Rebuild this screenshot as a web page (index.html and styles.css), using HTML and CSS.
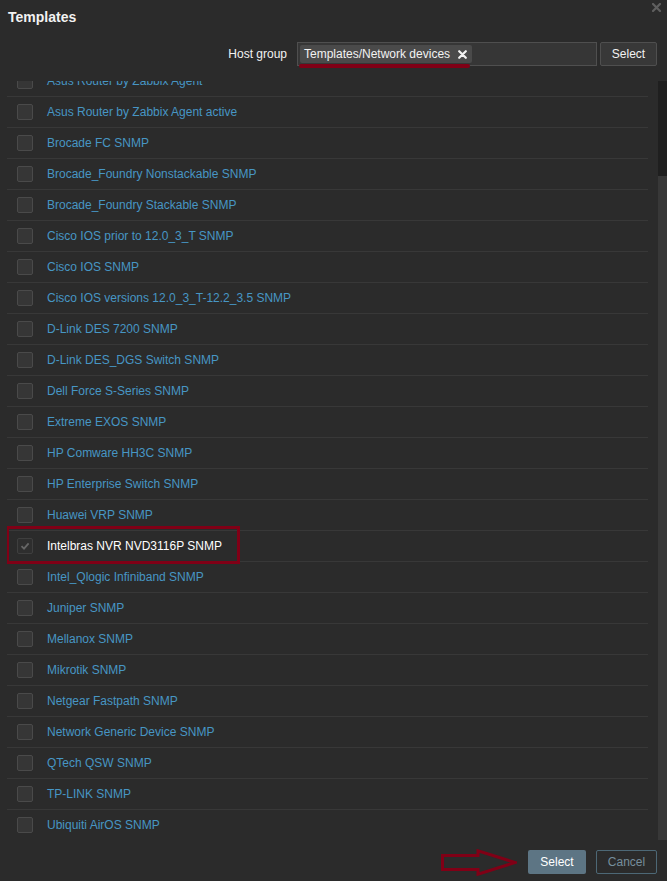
FILE: index.html
```html
<!DOCTYPE html>
<html>
<head>
<meta charset="utf-8">
<link rel="stylesheet" href="styles.css">
</head>
<body>
<div class="dialog">
  <header class="dlg-head">
    <h1 class="title">Templates</h1>
    <button class="close" aria-label="Close">
      <svg width="9" height="9" viewBox="0 0 9 9"><path d="M1 1 L8 8 M8 1 L1 8" stroke="#5f5f5f" stroke-width="2.2" stroke-linecap="square"/></svg>
    </button>
  </header>

  <div class="filter">
    <span class="filter-label">Host group</span>
    <div class="ms">
      <span class="chip">Templates/Network devices
        <svg class="chip-x" width="9" height="9" viewBox="0 0 9 9"><path d="M1.2 1.2 L7.8 7.8 M7.8 1.2 L1.2 7.8" stroke="#f2f2f2" stroke-width="2.2" stroke-linecap="round"/></svg>
      </span>
      <span class="mark-underline"></span>
    </div>
    <button class="btn-alt">Select</button>
  </div>

  <div class="body">
    <div class="viewport">
      <ul class="list">
        <li class="row"><span class="cb"></span><a class="lnk">Asus Router by Zabbix Agent</a></li>
        <li class="row"><span class="cb"></span><a class="lnk">Asus Router by Zabbix Agent active</a></li>
        <li class="row"><span class="cb"></span><a class="lnk">Brocade FC SNMP</a></li>
        <li class="row"><span class="cb"></span><a class="lnk">Brocade_Foundry Nonstackable SNMP</a></li>
        <li class="row"><span class="cb"></span><a class="lnk">Brocade_Foundry Stackable SNMP</a></li>
        <li class="row"><span class="cb"></span><a class="lnk">Cisco IOS prior to 12.0_3_T SNMP</a></li>
        <li class="row"><span class="cb"></span><a class="lnk">Cisco IOS SNMP</a></li>
        <li class="row"><span class="cb"></span><a class="lnk">Cisco IOS versions 12.0_3_T-12.2_3.5 SNMP</a></li>
        <li class="row"><span class="cb"></span><a class="lnk">D-Link DES 7200 SNMP</a></li>
        <li class="row"><span class="cb"></span><a class="lnk">D-Link DES_DGS Switch SNMP</a></li>
        <li class="row"><span class="cb"></span><a class="lnk">Dell Force S-Series SNMP</a></li>
        <li class="row"><span class="cb"></span><a class="lnk">Extreme EXOS SNMP</a></li>
        <li class="row"><span class="cb"></span><a class="lnk">HP Comware HH3C SNMP</a></li>
        <li class="row"><span class="cb"></span><a class="lnk">HP Enterprise Switch SNMP</a></li>
        <li class="row"><span class="cb"></span><a class="lnk">Huawei VRP SNMP</a></li>
        <li class="row row-sel"><span class="cb cb-on"><svg width="14" height="14" viewBox="0 0 14 14"><path d="M3.5 7.2 L6 9.6 L10.6 4.4" fill="none" stroke="#666666" stroke-width="1.8"/></svg></span><span class="sel-text">Intelbras NVR NVD3116P SNMP</span><span class="mark-box"></span></li>
        <li class="row"><span class="cb"></span><a class="lnk">Intel_Qlogic Infiniband SNMP</a></li>
        <li class="row"><span class="cb"></span><a class="lnk">Juniper SNMP</a></li>
        <li class="row"><span class="cb"></span><a class="lnk">Mellanox SNMP</a></li>
        <li class="row"><span class="cb"></span><a class="lnk">Mikrotik SNMP</a></li>
        <li class="row"><span class="cb"></span><a class="lnk">Netgear Fastpath SNMP</a></li>
        <li class="row"><span class="cb"></span><a class="lnk">Network Generic Device SNMP</a></li>
        <li class="row"><span class="cb"></span><a class="lnk">QTech QSW SNMP</a></li>
        <li class="row"><span class="cb"></span><a class="lnk">TP-LINK SNMP</a></li>
        <li class="row"><span class="cb"></span><a class="lnk">Ubiquiti AirOS SNMP</a></li>
      </ul>
    </div>
    <div class="scrollbar"><div class="thumb"></div></div>
  </div>

  <footer class="dlg-foot">
    <svg class="arrow" width="76" height="27" viewBox="0 0 76 27"><polygon points="1.5,6.5 37,6.5 37,1.8 74,13.5 37,25.2 37,20.5 1.5,20.5" fill="none" stroke="#800016" stroke-width="3" stroke-linejoin="miter"/></svg>
    <button class="btn-main">Select</button>
    <button class="btn-cancel">Cancel</button>
  </footer>
</div>
</body>
</html>
```

FILE: styles.css
```css
* { box-sizing: border-box; }
html, body { margin: 0; padding: 0; background: #2b2b2b; }
body {
  font-family: "Liberation Sans", Arial, sans-serif;
  font-size: 12px;
  color: #f2f2f2;
}
.dialog {
  width: 667px;
  height: 881px;
  background: #2b2b2b;
  display: flex;
  flex-direction: column;
  position: relative;
  overflow: hidden;
}
.dlg-head {
  height: 34px;
  padding: 9px 8px 0;
}
.title {
  margin: 0;
  font-size: 14px;
  line-height: 16px;
  font-weight: bold;
  color: #f2f2f2;
}
.close {
  position: absolute;
  top: 2px;
  right: 5px;
  width: 11px;
  height: 11px;
  padding: 1px;
  border: 0;
  background: transparent;
  display: flex;
}
.filter {
  margin-top: 8px;
  height: 24px;
  display: flex;
  justify-content: flex-end;
  align-items: center;
  padding-right: 10px;
}
.filter-label {
  margin-right: 10px;
  color: #f2f2f2;
}
.ms {
  position: relative;
  width: 300px;
  height: 24px;
  border: 1px solid #4f4f4f;
  background: #363636;
  padding: 2px;
  display: flex;
  align-items: flex-start;
}
.chip {
  height: 18px;
  display: inline-flex;
  align-items: center;
  padding: 0 5px 0 4px;
  background: #4a4a4a;
  color: #f2f2f2;
  border-radius: 2px;
  white-space: nowrap;
}
.chip-x { margin-left: 8px; }
.mark-underline {
  position: absolute;
  left: 1px;
  top: 21px;
  width: 171px;
  height: 4px;
  background: #800016;
  border-radius: 2px;
}
.btn-alt {
  margin-left: 3px;
  width: 57px;
  height: 24px;
  border: 1px solid #4f4f4f;
  background: #383838;
  color: #f2f2f2;
  font-family: inherit;
  font-size: 12px;
  padding: 0;
  border-radius: 2px;
}
.body {
  margin-top: 15px;
  height: 759px;
  display: flex;
  padding-left: 7px;
}
.viewport {
  width: 641px;
  height: 759px;
  overflow: hidden;
}
.list {
  list-style: none;
  margin: -15px 0 0;
  padding: 0;
}
.row {
  position: relative;
  height: 31px;
  border-bottom: 1px solid #383838;
  display: flex;
  align-items: center;
  padding-left: 10px;
}
.cb {
  width: 16px;
  height: 16px;
  border: 1px solid #4a4a4a;
  background: #363636;
  border-radius: 2px;
  margin-right: 14px;
  flex: none;
  display: flex;
  align-items: center;
  justify-content: center;
}
.cb-on { background: #2e2e2e; border-color: #3f3f3f; }
.lnk { color: #4796c4; text-decoration: none; }
.sel-text { color: #ffffff; }
.mark-box {
  position: absolute;
  left: -1px;
  top: -5px;
  width: 234px;
  height: 38px;
  border: 3px solid #800016;
}
.scrollbar {
  margin-left: 10px;
  width: 9px;
  height: 759px;
  background: #383838;
}
.thumb {
  height: 95px;
  background: #1f1f1f;
}
.dlg-foot {
  flex: 1;
  display: flex;
  justify-content: flex-end;
  align-items: flex-start;
  padding: 10px 10px 0 0;
}
.arrow { margin-top: -1px; margin-right: 11px; }
.btn-main {
  width: 58px;
  height: 24px;
  border: 0;
  background: #5d7584;
  color: #ffffff;
  font-family: inherit;
  font-size: 12px;
  padding: 0;
  border-radius: 2px;
  margin-right: 10px;
}
.btn-cancel {
  width: 61px;
  height: 24px;
  border: 1px solid #4d6876;
  background: transparent;
  color: #768e9c;
  font-family: inherit;
  font-size: 12px;
  padding: 0;
  border-radius: 2px;
}
```
